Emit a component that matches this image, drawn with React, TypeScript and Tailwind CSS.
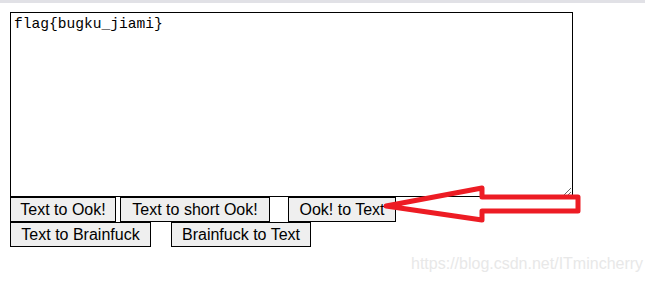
import React from "react";

const btn =
  "h-[25px] border border-black bg-[#efefef] text-[16px] leading-none text-black flex items-center justify-center shrink-0";

export default function App() {
  return (
    <div
      className="relative w-[647px] h-[282px] bg-white overflow-hidden"
      style={{ fontFamily: '"Liberation Sans", Arial, sans-serif' }}
    >
      <div className="w-[645px] h-[3px] bg-[#e1e1e6]" />
      <div className="pl-[10px] pt-[9px] flex flex-col">
        <textarea
          readOnly
          defaultValue="flag{bugku_jiami}"
          className="block w-[563px] h-[185px] border border-black p-[3px] text-[14.6px] leading-[16px] text-black outline-none resize"
          style={{ fontFamily: '"Liberation Mono", "Courier New", monospace' }}
        />
        <div className="flex">
          <button className={`${btn} w-[106px]`}>Text to Ook!</button>
          <button className={`${btn} w-[150px] ml-[4px]`}>Text to short Ook!</button>
          <button className={`${btn} w-[108px] ml-[18px]`}>Ook! to Text</button>
        </div>
        <div className="flex">
          <button className={`${btn} w-[141px]`}>Text to Brainfuck</button>
          <button className={`${btn} w-[140px] ml-[20px]`}>Brainfuck to Text</button>
        </div>
      </div>
      <svg
        className="absolute left-0 top-0 pointer-events-none"
        width="647"
        height="282"
      >
        <polygon
          points="386,206 482,188 482,197 578,197 578,211 482,211 482,220"
          fill="none"
          stroke="#ed1c24"
          strokeWidth="5"
          strokeLinejoin="round"
        />
      </svg>
      <div className="absolute left-[411px] top-[252px] text-[16px] text-[#e8e8e8] whitespace-nowrap">
        https://blog.csdn.net/ITmincherry
      </div>
    </div>
  );
}
